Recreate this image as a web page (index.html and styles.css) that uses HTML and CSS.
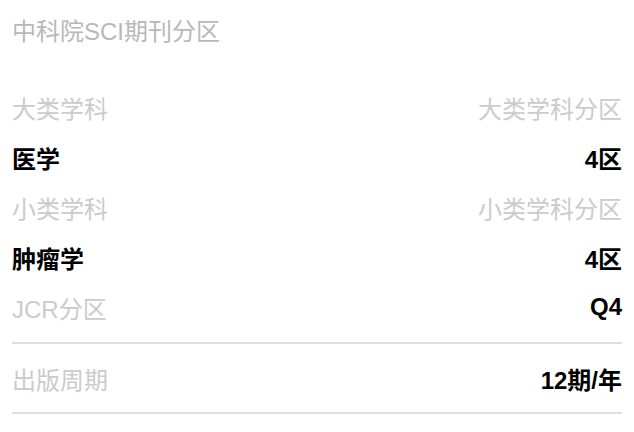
FILE: index.html
```html
<!DOCTYPE html>
<html lang="zh">
<head>
    <meta charset="UTF-8">
    <meta name="viewport" content="width=device-width, initial-scale=1.0">
    <title>中科院SCI期刊分区</title>
    <link rel="stylesheet" href="styles.css">
</head>
<body>
<h1 class="title">中科院SCI期刊分区</h1>
<div class="list">
    <div class="row"><span class="label">大类学科</span><span class="label">大类学科分区</span></div>
    <div class="row"><span class="value">医学</span><span class="value">4区</span></div>
    <div class="row"><span class="label">小类学科</span><span class="label">小类学科分区</span></div>
    <div class="row"><span class="value">肿瘤学</span><span class="value">4区</span></div>
    <div class="row"><span class="label">JCR分区</span><span class="value">Q4</span></div>
</div>
<div class="divider"></div>
<div class="row big"><span class="label">出版周期</span><span class="value">12期/年</span></div>
<div class="divider"></div>
</body>
</html>
```

FILE: styles.css
```css
body { margin: 0; padding: 0 12px; font-family: "Liberation Sans", "Noto Sans CJK SC", sans-serif; background: #fff; }
.title { margin: 0; font-size: 24px; font-weight: normal; line-height: 64px; color: #b8b8b8; }
.list { margin-top: 18px; }
.row { display: flex; justify-content: space-between; align-items: center; height: 50px; }
.row.big { height: 68px; }
.label { font-size: 24px; color: #cbcbcb; }
.value { font-size: 24px; font-weight: bold; color: #000; }
.divider { height: 2px; background: #dedede; margin-top: 10px; }
.row.big + .divider { margin-top: 0; }
```
